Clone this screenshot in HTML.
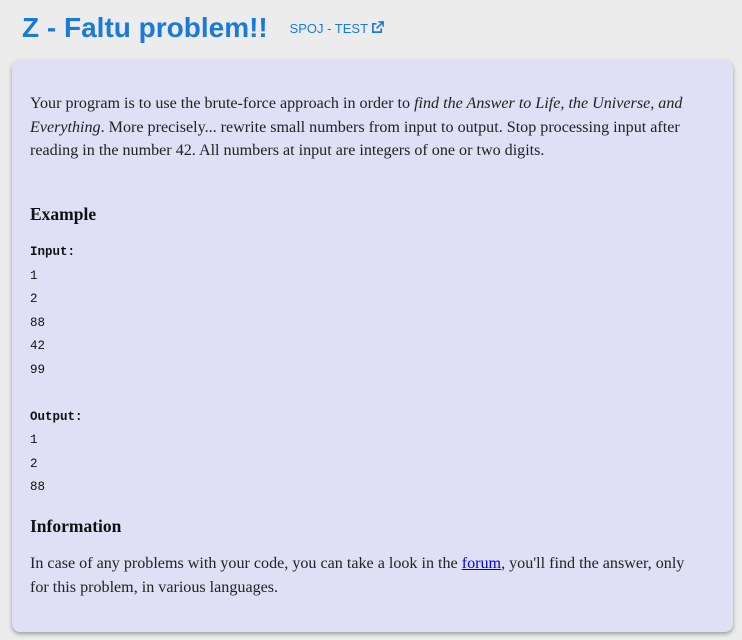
<!DOCTYPE html>
<html><head><style>
html,body{margin:0;padding:0;background:#ececec;width:742px;height:640px;overflow:hidden}
h1{position:absolute;left:22px;top:8px;margin:0;font:bold 28px/40px "Liberation Sans",sans-serif;color:#1a7ad8;white-space:nowrap}
h1 small{font-size:13px;margin-left:14px;vertical-align:4px;font-weight:400;color:#1a7ad8}
.card{position:absolute;left:12px;top:60px;width:721px;height:572px;background:#dfdff5;border-radius:8px;box-shadow:0 2px 4px rgba(0,0,0,.35)}
.t{position:absolute;left:30px;font:16.1px/23.5px "Liberation Serif",serif;color:#222;white-space:nowrap}
h3{position:absolute;left:30px;margin:0;font:bold 17.5px/20px "Liberation Serif",serif;color:#111}
pre{position:absolute;left:30px;margin:0;font:12.5px/23.5px "Liberation Mono",monospace;color:#111}
a{color:#00e}
</style></head><body>
<h1>Z - Faltu problem!! <small>SPOJ - TEST <svg width="13" height="13" viewBox="0 0 14 14" style="vertical-align:-1px"><path d="M11 8v4H2V3h4" fill="none" stroke="#1a7ad8" stroke-width="1.8"/><path d="M8 1h5v5M13 1L6 8" fill="none" stroke="#1a7ad8" stroke-width="1.8"/></svg></small></h1>
<div class="card"></div>
<div class="t" style="top:92px">Your program is to use the brute-force approach in order to <i>find the Answer to Life, the Universe, and</i><br><i>Everything</i>. More precisely... rewrite small numbers from input to output. Stop processing input after<br>reading in the number 42. All numbers at input are integers of one or two digits.</div>
<h3 style="top:204px">Example</h3>
<pre style="top:241px"><b>Input:</b>
1
2
88
42
99

<b>Output:</b>
1
2
88</pre>
<h3 style="top:516px">Information</h3>
<div class="t" style="top:552px">In case of any problems with your code, you can take a look in the <a href="#">forum</a>, you'll find the answer, only<br>for this problem, in various languages.</div>
</body></html>
